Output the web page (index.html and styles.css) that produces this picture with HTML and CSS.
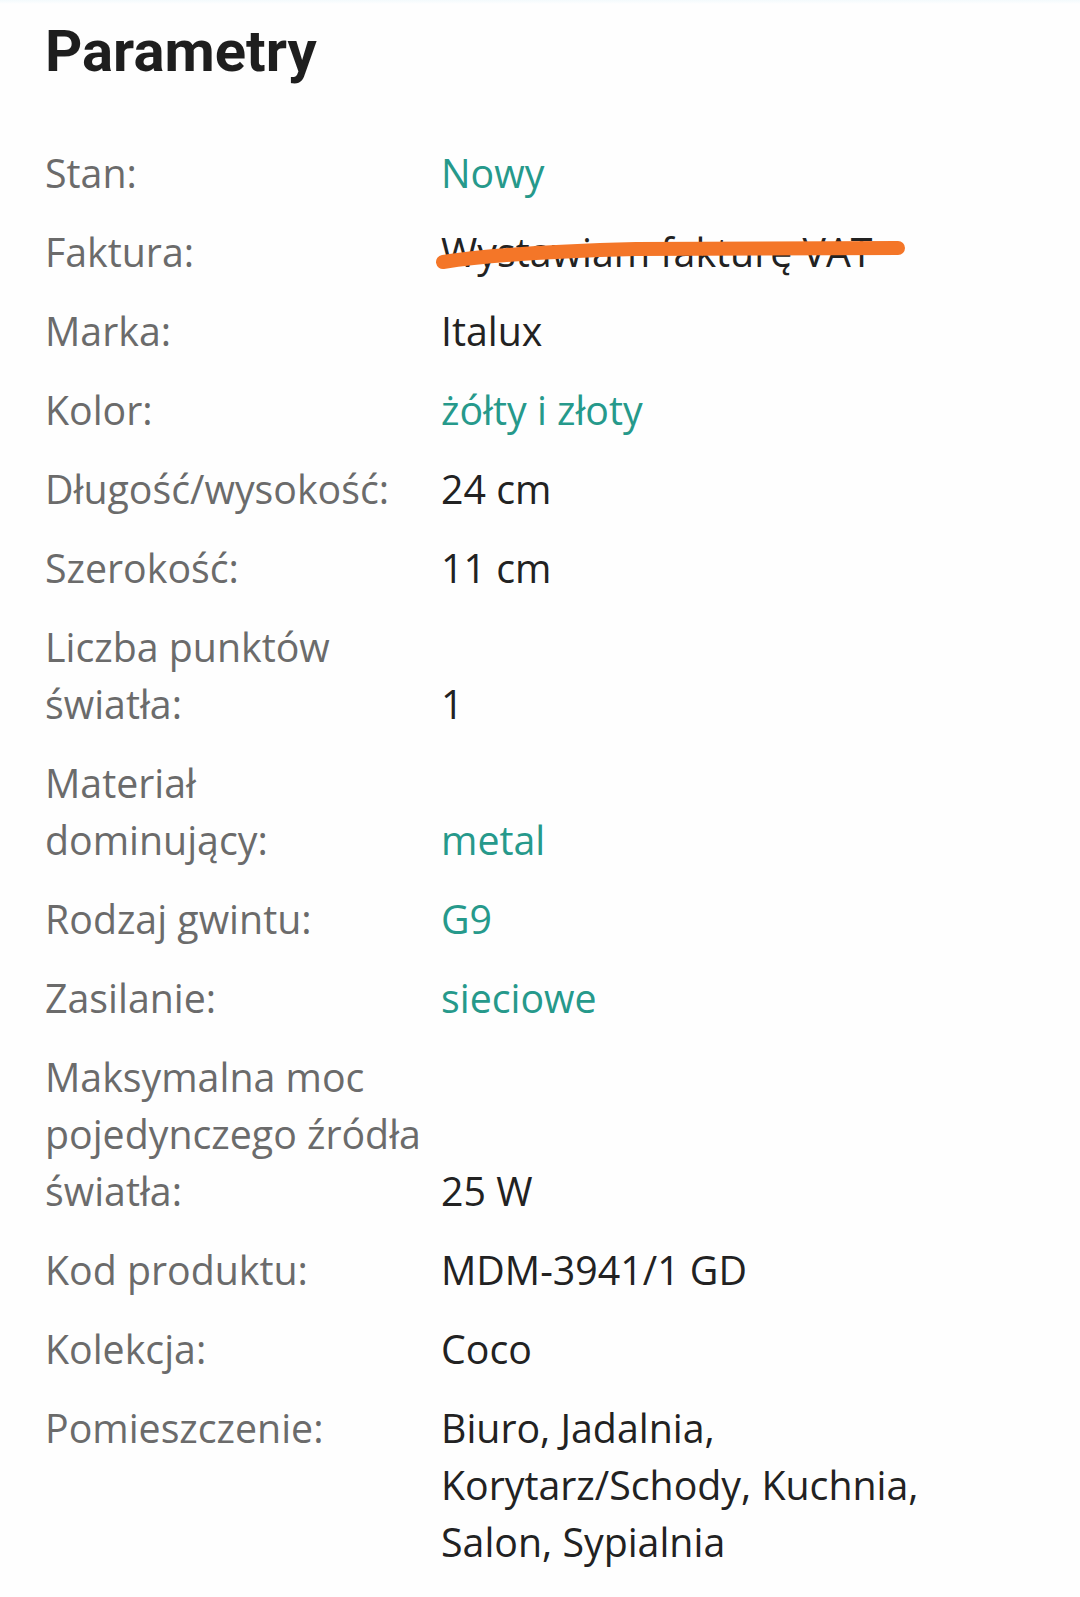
FILE: index.html
```html
<!DOCTYPE html>
<html lang="pl">
    <head>
        <meta charset="UTF-8" />
        <title>Parametry</title>
        <link rel="stylesheet" href="styles.css">
    </head>
    <body>
        <div class="top-line"></div>
        <section class="params">
            <h1 class="params-title">Parametry</h1>

            <dl class="params-list">
                <dt>Stan:</dt>
                <dd class="link">Nowy</dd>

                <dt>Faktura:</dt>
                <dd class="hidden-value">
                    Wystawiam fakturę VAT
                    <!-- marker scribble drawn over the value -->
                    <svg class="scribble" width="480" height="40" viewBox="0 0 480 40">
                        <path d="M7 30 C 60 22, 120 19, 200 17 L 462 16" />
                    </svg>
                </dd>

                <dt>Marka:</dt>
                <dd>Italux</dd>

                <dt>Kolor:</dt>
                <dd class="link">żółty i złoty</dd>

                <dt>Długość/wysokość:</dt>
                <dd>24 cm</dd>

                <dt>Szerokość:</dt>
                <dd>11 cm</dd>

                <dt>Liczba punktów światła:</dt>
                <dd>1</dd>

                <dt>Materiał dominujący:</dt>
                <dd class="link">metal</dd>

                <dt>Rodzaj gwintu:</dt>
                <dd class="link">G9</dd>

                <dt>Zasilanie:</dt>
                <dd class="link">sieciowe</dd>

                <dt>Maksymalna moc pojedynczego źródła światła:</dt>
                <dd>25 W</dd>

                <dt>Kod produktu:</dt>
                <dd>MDM-3941/1 GD</dd>

                <dt>Kolekcja:</dt>
                <dd>Coco</dd>

                <dt>Pomieszczenie:</dt>
                <dd>Biuro, Jadalnia, Korytarz/Schody, Kuchnia, Salon, Sypialnia</dd>
            </dl>
        </section>
    </body>
</html>
```

FILE: styles.css
```css
body {
    margin: 0;
    background-color: #fefefe;
    font-family: 'Open Sans', 'Noto Sans', sans-serif;
}

.top-line {
    height: 4px;
    background: linear-gradient(#f3fafc, #fefefe);
}

.params {
    padding: 12px 60px 40px 45px;
}

.params-title {
    margin: 0 0 59px;
    font-family: Roboto, 'Liberation Sans', sans-serif;
    font-weight: 700;
    font-size: 58px;
    line-height: 70px;
    color: #1e1e1e;
    letter-spacing: 0;
}

/* one grid for all rows: labels stick to the top, values to the bottom */
.params-list {
    display: grid;
    grid-template-columns: 381px 1fr;
    column-gap: 15px;
    row-gap: 22px;
    align-items: end;
    margin: 0;
    font-size: 39.3px;
    line-height: 57px;
}

.params-list dt {
    align-self: start;
    color: #6b6b6b;
}

.params-list dd {
    margin: 0;
    color: #222;
}

.params-list dd.link {
    color: #26998b;
}

.hidden-value {
    position: relative;
}

.scribble {
    position: absolute;
    left: -5px;
    top: 8px;
    overflow: visible;
}

.scribble path {
    fill: none;
    stroke: #f47628;
    stroke-width: 14;
    stroke-linecap: round;
}
```
